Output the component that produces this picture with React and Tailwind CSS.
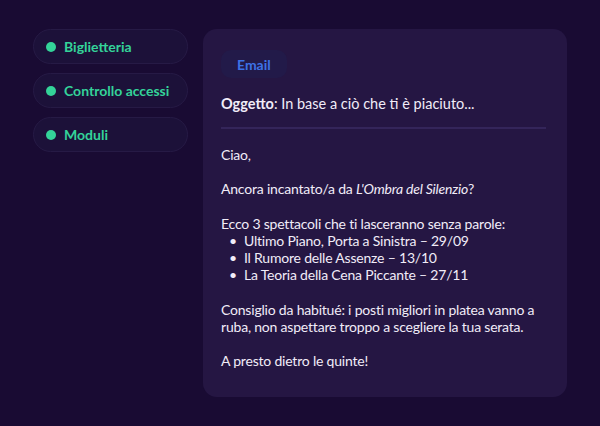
import React from 'react';

const navItems = ['Biglietteria', 'Controllo accessi', 'Moduli'];

const shows = [
  'Ultimo Piano, Porta a Sinistra – 29/09',
  'Il Rumore delle Assenze – 13/10',
  'La Teoria della Cena Piccante – 27/11',
];

export default function App() {
  return (
    <div
      className="w-[600px] h-[426px] bg-[#190b33] flex gap-[15px] pl-[33px] pt-[29px]"
      style={{ fontFamily: 'Lato, "Noto Sans", sans-serif' }}
    >
      {/* Sidebar */}
      <div className="flex flex-col gap-[9px] w-[155px]">
        {navItems.map((item) => (
          <div
            key={item}
            className="h-[35px] rounded-full bg-[#1c1139] border border-[#261a45] flex items-center gap-[8px] pl-[12px]"
          >
            <span className="w-[10px] h-[10px] rounded-full bg-[#34d399] shrink-0"></span>
            <span className="text-[14px] font-bold text-[#34d399] leading-none">{item}</span>
          </div>
        ))}
      </div>

      {/* Email card */}
      <div className="w-[364px] h-[368px] bg-[#251643] rounded-[14px] px-[18px] pt-[21px] text-[14px] text-[#f1ecf8]">
        <span className="inline-flex items-center h-[28px] px-[16px] rounded-[10px] bg-[#221a49] text-[#3d72e6] font-bold text-[14px]">
          Email
        </span>

        <p className="mt-[17px] leading-[17px] text-[14.5px]">
          <strong className="font-bold">Oggetto</strong>: In base a ciò che ti è piaciuto...
        </p>

        <div className="mt-[15px] mb-[17px] mr-[3px] h-[2px] bg-[#34255a]"></div>

        <div className="leading-[17.2px] tracking-[-0.2px]">
          <p>Ciao,</p>
          <p className="mt-[17.2px]">
            Ancora incantato/a da <em>L'Ombra del Silenzio</em>?
          </p>
          <p className="mt-[17.2px]">Ecco 3 spettacoli che ti lasceranno senza parole:</p>
          <ul className="pl-[8px]">
            {shows.map((s) => (
              <li key={s} className="flex gap-[7px]">
                <span>•</span>
                <span>{s}</span>
              </li>
            ))}
          </ul>
          <p className="mt-[17.2px] pr-[10px]">
            Consiglio da habitué: i posti migliori in platea vanno a ruba, non aspettare troppo a scegliere la tua serata.
          </p>
          <p className="mt-[17.2px]">A presto dietro le quinte!</p>
        </div>
      </div>
    </div>
  );
}
